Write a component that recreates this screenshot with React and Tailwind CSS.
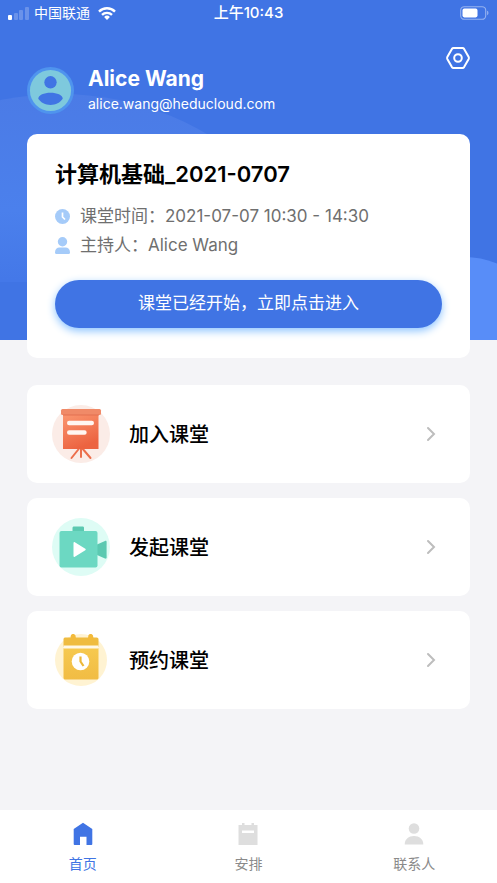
import React, { useState } from "react";

const StatusBar = () => (
  <div className="grid grid-cols-3 items-center h-[26px] px-2 text-white leading-6">
    <div className="flex items-center gap-1">
      <svg className="w-[22px] h-3.5 shrink-0" viewBox="0 0 22 14" fill="#fff">
        <rect x="0" y="9" width="4" height="5" rx="1" />
        <rect x="6" y="7" width="4" height="7" rx="1" opacity="0.22" />
        <rect x="11" y="4" width="4" height="10" rx="1" opacity="0.22" />
        <rect x="17" y="1" width="4" height="13" rx="1" opacity="0.22" />
      </svg>
      <span className="whitespace-nowrap text-sm">中国联通</span>
      <svg className="w-[18px] h-[13px] ml-1 shrink-0" viewBox="0 0 18 13" fill="none" stroke="#fff" strokeWidth="2.4">
        <path d="M1 4.6a11.4 11.4 0 0 1 16 0" />
        <path d="M4 7.9a7.1 7.1 0 0 1 10 0" />
        <path d="M9 13 6.1 10a4.2 4.2 0 0 1 5.800 0z" fill="#fff" stroke="none" />
      </svg>
    </div>
    <time className="text-center text-[15px] font-medium">上午10:43</time>
    <svg className="w-[29px] h-3.5 justify-self-end" viewBox="0 0 29 14" fill="none">
      <rect x="0.7" y="0.7" width="25" height="12.6" rx="3.6" stroke="#fff" strokeOpacity="0.45" strokeWidth="1.1" />
      <rect x="2.5" y="2.6" width="15" height="8.8" rx="1.8" fill="#fff" />
      <path d="M27.2 4.8c1.6.5 1.6 3.9 0 4.4z" fill="#fff" fillOpacity="0.5" />
    </svg>
  </div>
);

const Avatar = () => (
  <svg className="w-[47px] h-[47px] shrink-0" viewBox="0 0 48 48">
    <circle cx="24" cy="24" r="24" fill="#4f94ee" />
    <circle cx="24" cy="24" r="21" fill="#7ec9dd" />
    <circle cx="24" cy="15.6" r="6.3" fill="#4074e4" />
    <path d="M11.5 32.5c0-4 6-6.2 12.5-6.2s12.5 2.2 12.5 6.2c-2.6 3.9-7.2 6.3-12.5 6.3s-9.9-2.4-12.5-6.3z" fill="#4074e4" />
  </svg>
);

const JoinIcon = () => (
  <svg className="w-[60px] h-[60px] shrink-0" viewBox="0 0 60 60">
    <defs>
      <linearGradient id="board" x1="0" y1="0" x2="0.4" y2="1">
        <stop offset="0" stopColor="#fb9872" />
        <stop offset="1" stopColor="#ec6340" />
      </linearGradient>
    </defs>
    <circle cx="30" cy="30" r="29" fill="#fbece7" />
    <path d="m28.500 44-8 10M31 44l8.500 10M30 44v9" stroke="#ec6f4c" strokeWidth="2" strokeLinecap="round" />
    <path d="M12 9h35.500v36H12z" fill="url(#board)" />
    <rect x="10" y="5" width="40" height="6" rx="1.500" fill="#f08a68" />
    <path d="M12 11h36" stroke="#de6a4b" strokeWidth="0.8" />
    <path d="M18.200 19h22.600M18.200 28.500h15.300" stroke="#fff6f1" strokeWidth="4.400" strokeLinecap="round" />
  </svg>
);

const StartIcon = () => (
  <svg className="w-[60px] h-[60px] shrink-0" viewBox="0 0 60 60">
    <circle cx="30" cy="30" r="29" fill="#defcf5" />
    <path d="M21.500 15v-4c0-1 .5-1.500 1.500-1.500h8.500c1 0 1.500.5 1.500 1.500v4z" fill="#5bc9b1" />
    <path d="m46 27.500 8-3.500c1-.4 1.600 0 1.600 1v15.500c0 1-.6 1.400-1.600 1L46 38z" fill="#5bc9b1" />
    <rect x="8.500" y="14" width="38" height="36.500" rx="2" fill="#6cd8c2" />
    <path d="M22.500 26v13c0 .8.600 1.100 1.300.7l10.500-6.500c.6-.4.6-1 0-1.400l-10.500-6.500c-.7-.4-1.300-.1-1.300.7z" fill="#fff" />
  </svg>
);

const BookIcon = () => (
  <svg className="w-[60px] h-[60px] shrink-0" viewBox="0 0 60 60">
    <defs>
      <linearGradient id="cal" x1="0" y1="0" x2="0" y2="1">
        <stop offset="0" stopColor="#f6c94f" />
        <stop offset="1" stopColor="#f1bc44" />
      </linearGradient>
    </defs>
    <circle cx="30" cy="30" r="26" fill="#fff3d2" />
    <path d="M12.500 17V9.500c0-1.400.8-2 2-2h31c1.400 0 2 .8 2 2V17z" fill="#efbc40" />
    <path d="M12.500 18h35v29.500c0 1.400-.7 2-2 2h-31c-1.300 0-2-.6-2-2z" fill="url(#cal)" />
    <path d="M12.500 15.500h35v3h-35z" fill="#fff8e6" />
    <path d="M18.500 10c1.500-1 1-4 1.500-5 .9-1.600 4-1.500 4.500.5.400 1.800 0 3.500 1.500 4.500zM36 10c1.500-1 1-4 1.500-5 .9-1.600 4-1.500 4.500.5.400 1.800 0 3.500 1.500 4.500z" fill="#f3ba3a" />
    <circle cx="29.500" cy="31.500" r="8.800" fill="#fff" />
    <path d="M29.500 26.500v5l3 4.500" fill="none" stroke="#edb838" strokeWidth="2.200" />
  </svg>
);

const actions = [
  { label: "加入课堂", icon: JoinIcon },
  { label: "发起课堂", icon: StartIcon },
  { label: "预约课堂", icon: BookIcon },
];

const HomeIcon = () => (
  <svg className="w-6 h-6" viewBox="0 0 24 24" fill="currentColor">
    <path d="M12 .8 21.300 7V22c0 .6-.3 1-.9 1H15.500v-8.200H9V23H3.600c-.6 0-.9-.4-.9-1V7z" />
  </svg>
);

const PlanIcon = () => (
  <svg className="w-6 h-6" viewBox="0 0 24 24" fill="#dedede">
    <path fillRule="evenodd" d="M6 3V1h2.500v2h7V1H18v2h3.500v20h-19V3zM6 8.500V11h12V8.500z" />
  </svg>
);

const ContactIcon = () => (
  <svg className="w-6 h-6" viewBox="0 0 24 24" fill="#dedede">
    <circle cx="12" cy="6.500" r="5.300" />
    <path d="M2.700 22.500c0-5.500 4-8.500 9.300-8.500s9.300 3 9.300 8.500z" />
  </svg>
);

const tabs = [
  { id: "home", label: "首页", icon: HomeIcon },
  { id: "plan", label: "安排", icon: PlanIcon },
  { id: "contacts", label: "联系人", icon: ContactIcon },
];

const App = () => {
  const [tab, setTab] = useState("home");

  return (
    <div className="min-h-screen flex flex-col bg-[#f4f4f7] font-['Inter','Noto_Sans_CJK_SC',sans-serif]">
      <div className="relative flex-1">
        {/* Blue backdrop behind the header and the card */}
        <div className="absolute inset-x-0 top-0 h-[340px] overflow-hidden bg-[#4074e4]">
          <div className="absolute -left-[230px] top-[94px] w-[580px] h-[188px] overflow-hidden">
            <div className="w-[580px] h-[580px] rounded-full bg-linear-to-b from-[#4b7be6] via-[#4b80ec] via-20% to-[#4478e8] to-32%" />
          </div>
          <div className="absolute -right-12 top-[257px] w-40 h-40 rounded-full bg-[#588df8]" />
        </div>

        <div className="relative">
          <StatusBar />

          <header className="flex items-start justify-between pl-[27px] pr-[26px] pt-[19px]">
            <div className="flex items-center gap-3.5 pt-5">
              <Avatar />
              <div className="text-white">
                <h1 className="text-[21px] leading-7 font-bold">Alice Wang</h1>
                <p className="text-sm leading-[22px]">alice.wang@heducloud.com</p>
              </div>
            </div>
            <button type="button" aria-label="设置" className="text-white">
              <svg className="w-[26px] h-[26px]" viewBox="0 0 26 26" fill="none" stroke="currentColor" strokeWidth="2" strokeLinejoin="round">
                <path d="M8.500 3h9c.7 0 1.200.3 1.600.9l4.600 8.200c.3.600.3 1.200 0 1.800l-4.600 8.200c-.4.600-.9.900-1.600.9h-9c-.7 0-1.200-.3-1.600-.9l-4.600-8.200c-.3-.6-.3-1.200 0-1.800l4.600-8.200c.4-.6.900-.9 1.600-.9z" />
                <circle cx="13" cy="13" r="3.800" />
              </svg>
            </button>
          </header>

          <main className="px-[27px] pb-8">
            {/* Current class */}
            <section className="mt-[19px] bg-white rounded-[10px] px-7 pt-6 pb-[30px]">
              <h2 className="text-[22px] leading-8 font-semibold text-black">计算机基础_2021-0707</h2>
              <div className="mt-3 text-[17px] leading-[29px] text-[#6f6f6f]">
                <p className="flex items-center gap-2.5">
                  <svg className="w-[15px] h-[15px] shrink-0" viewBox="0 0 15 15">
                    <circle cx="7.500" cy="7.500" r="7.500" fill="#a5cbf9" />
                    <path d="M7.500 3.500V8l2.500 2.500" fill="none" stroke="#fff" strokeWidth="1.700" />
                  </svg>
                  课堂时间：2021-07-07 10:30 - 14:30
                </p>
                <p className="flex items-center gap-2.5">
                  <svg className="w-[15px] h-[17px] shrink-0" viewBox="0 0 15 17" fill="#a5cbf9">
                    <circle cx="7.500" cy="4.700" r="4.700" />
                    <path d="M0 15.500C0 12.200 2 10.500 4.500 10.500h6c2.500 0 4.500 1.700 4.500 5 0 .9-.5 1.500-1.400 1.500H1.400C.5 17 0 16.400 0 15.500z" />
                  </svg>
                  主持人：Alice Wang
                </p>
              </div>
              <button
                type="button"
                className="mt-5 w-full h-12 rounded-full bg-[#4074e4] text-white text-[17px] shadow-[0_3px_8px_#8cc4ff]"
              >
                课堂已经开始，立即点击进入
              </button>
            </section>

            <nav className="mt-[27px] flex flex-col gap-[15px]">
              {actions.map(({ label, icon: Icon }) => (
                <button
                  key={label}
                  type="button"
                  className="flex items-center w-full h-[98px] pl-6 pr-8 bg-white rounded-[10px] text-left"
                >
                  <Icon />
                  <span className="flex-1 pl-[18px] pt-0.5 text-[20px] leading-7 font-medium text-black">{label}</span>
                  <svg className="w-3.5 h-4" viewBox="0 0 14 16" fill="none" stroke="#bdbdbd" strokeWidth="2" strokeLinecap="round">
                    <path d="m4 2 6 6-6 6" />
                  </svg>
                </button>
              ))}
            </nav>
          </main>
        </div>
      </div>

      {/* Tab bar */}
      <nav className="grid grid-cols-3 h-[73px] bg-white">
        {tabs.map(({ id, label, icon: Icon }) => (
          <button
            key={id}
            type="button"
            onClick={() => setTab(id)}
            className={`flex flex-col items-center pt-3 gap-2 text-sm leading-5 ${
              tab === id ? "text-[#4074e4]" : "text-[#8a8a8a]"
            }`}
          >
            <Icon />
            {label}
          </button>
        ))}
      </nav>
    </div>
  );
};

export default App;
